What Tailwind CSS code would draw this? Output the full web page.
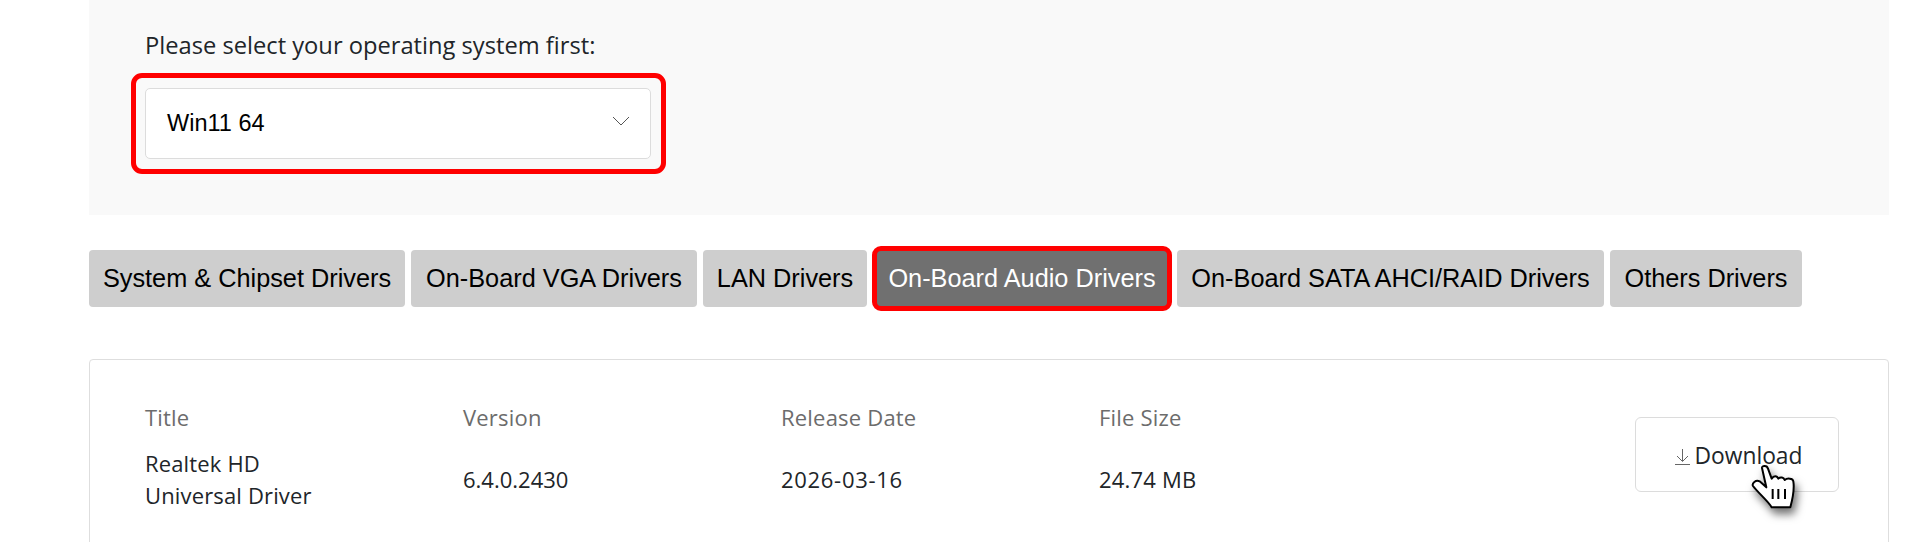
<!DOCTYPE html>
<html lang="en">
<head>
  <meta charset="UTF-8">
  <title>Drivers</title>
  <script src="https://cdn.jsdelivr.net/npm/@tailwindcss/browser@4"></script>
</head>
<body class="h-[542px] overflow-hidden bg-white pl-[89px] pr-[31px] font-['Open_Sans',sans-serif] text-[#212529]">
  <!-- OS select -->
  <section class="h-[215px] bg-[#f9f9f9] pl-[56px] pt-[30px]">
    <p class="text-[23.7px] leading-[30px]">Please select your operating system first:</p>
    <div class="relative mt-[28px] w-[506px]">
      <div class="flex h-[71px] items-center justify-between rounded-[5px] border border-[#dcdcdc] bg-white pl-[21px] pr-[20px] font-['Liberation_Sans',sans-serif] text-[23.5px] text-black">
        <span>Win11 64</span>
        <svg class="mb-[5px] h-[10px] w-[18px]" viewBox="0 0 18 10" fill="none" stroke="#555" stroke-width="1"><path d="M1 1l8 8 8-8"/></svg>
      </div>
      <div class="absolute -left-[14px] -right-[15px] -inset-y-[15px] rounded-[11px] border-[5px] border-[#ff0000]"></div>
    </div>
  </section>

  <!-- driver tabs -->
  <nav class="mt-[35px] flex gap-[6px] font-['Liberation_Sans',sans-serif] text-[25.3px] text-black">
    <button class="h-[57px] w-[316px] rounded-[4px] bg-[#cecece]">System &amp; Chipset Drivers</button>
    <button class="h-[57px] w-[286px] rounded-[4px] bg-[#cecece]">On-Board VGA Drivers</button>
    <button class="h-[57px] w-[164px] rounded-[4px] bg-[#cecece]">LAN Drivers</button>
    <div class="relative">
      <button class="h-[57px] w-[298px] rounded-[4px] bg-[#707070] text-white">On-Board Audio Drivers</button>
      <div class="absolute -inset-x-[1px] -inset-y-[4px] rounded-[9px] border-[5px] border-[#ff0000]"></div>
    </div>
    <button class="h-[57px] w-[427px] rounded-[4px] bg-[#cecece]">On-Board SATA AHCI/RAID Drivers</button>
    <button class="h-[57px] w-[192px] rounded-[4px] bg-[#cecece]">Others Drivers</button>
  </nav>

  <!-- driver card -->
  <section class="mt-[52px] flex h-[300px] items-start rounded-t-[4px] border border-[#dedede] pl-[55px] pr-[49px] pt-[42px]">
    <div class="w-[318px]">
      <p class="text-[22px] leading-[30px] tracking-[0.2px] text-[#6c6c6c]">Title</p>
      <p class="mt-[15px] text-[22px] leading-[32px] tracking-[0.15px]">Realtek HD<br>Universal Driver</p>
    </div>
    <div class="w-[318px]">
      <p class="text-[22px] leading-[30px] tracking-[0.2px] text-[#6c6c6c]">Version</p>
      <p class="mt-[31px] text-[22px] leading-[32px]">6.4.0.2430</p>
    </div>
    <div class="w-[318px]">
      <p class="text-[22px] leading-[30px] tracking-[0.2px] text-[#6c6c6c]">Release Date</p>
      <p class="mt-[31px] text-[22px] leading-[32px] tracking-[0.7px]">2026-03-16</p>
    </div>
    <div class="w-[318px]">
      <p class="text-[22px] leading-[30px] tracking-[0.2px] text-[#6c6c6c]">File Size</p>
      <p class="mt-[31px] text-[22px] leading-[32px] tracking-[0.2px]">24.74 MB</p>
    </div>
    <button class="relative mt-[15px] ml-auto flex h-[75px] w-[204px] items-center justify-center gap-[5px] rounded-[6px] border border-[#dcdcdc] pl-[3px] pt-[4px] text-[22.8px] text-[#212529]">
      <svg class="h-[16px] w-[15px]" viewBox="0 0 15 16" fill="none" stroke="#666" stroke-width="1"><path d="M7.5 0v12M2 7l5.5 5.5L13 7M0 15.5h15"/></svg>
      <span>Download</span>
      <svg class="absolute left-[115px] top-[46px] h-[45px] w-[45px] drop-shadow-[3px_6px_4px_rgba(0,0,0,0.55)]" viewBox="0 0 135 135" fill="#fff" stroke="#000" stroke-width="6" stroke-linejoin="round">
        <path d="M33 12C32 5 48 2 51 14L62 44C68 34 78 34 82 44C88 38 98 40 101 48C108 42 126 42 127 52C130 70 126 100 118 130L62 130C55 115 20 85 6 66C2 58 14 46 26 52L46 70Z"/>
        <path d="M65 75v30M82 75v30M102 75v30" fill="none"/>
      </svg>
    </button>
  </section>
</body>
</html>
